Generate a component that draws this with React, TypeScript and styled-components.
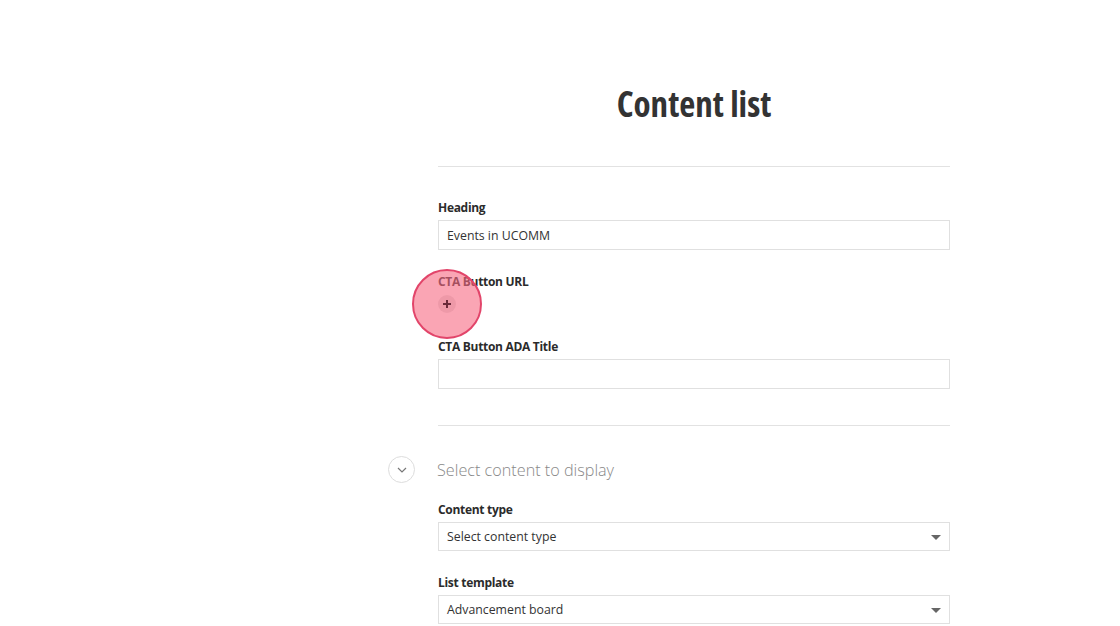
import styled, { createGlobalStyle } from 'styled-components';

const GlobalStyle = createGlobalStyle`
  body {
    margin: 0;
    background: #fff;
    font-family: "Open Sans", "Liberation Sans", sans-serif;
    color: #333;
  }
`;

const Field = ({ label, children }: { label: string; children: React.ReactNode }) => (
  <FieldWrap>
    <Label>{label}</Label>
    {children}
  </FieldWrap>
);

const App = () => {
  return (
    <Page>
      <GlobalStyle />
      <Column>
        <Title>Content list</Title>
        <Divider $top={38} />
        <Field label="Heading">
          <TextInput defaultValue="Events in UCOMM" />
        </Field>
        <Field label="CTA Button URL">
          <AddButton>
            <ClickMark />
            <svg width="10" height="10" viewBox="0 0 10 10">
              <path d="M5 1v8M1 5h8" stroke="#6b2a3a" strokeWidth="2" />
            </svg>
          </AddButton>
        </Field>
        <Field label="CTA Button ADA Title">
          <TextInput defaultValue="" />
        </Field>
        <Divider $top={13} $bottom={30} />
        <SectionHeader>
          <Toggle>
            <svg width="12" height="8" viewBox="0 0 12 8">
              <path d="M2 2l4 4 4-4" fill="none" stroke="#777" strokeWidth="1.2" />
            </svg>
          </Toggle>
          <SectionTitle>Select content to display</SectionTitle>
        </SectionHeader>
        <Field label="Content type">
          <Select>
            Select content type
            <Caret />
          </Select>
        </Field>
        <Field label="List template">
          <Select>
            Advancement board
            <Caret />
          </Select>
        </Field>
      </Column>
    </Page>
  );
};

export default App;

const Page = styled.div`
  padding-top: 80px;
  height: 626px;
  box-sizing: border-box;
  overflow: hidden;
`;

const Column = styled.div`
  width: 512px;
  margin-left: 438px;
  display: flex;
  flex-direction: column;
`;

const Title = styled.h1`
  margin: 0;
  text-align: center;
  font-size: 35px;
  line-height: 48px;
  font-weight: 700;
  font-stretch: 75%;
  color: #333;
`;

const Divider = styled.hr<{ $top: number; $bottom?: number }>`
  margin: ${(p) => p.$top}px 0 ${(p) => p.$bottom ?? 32}px;
  border: 0;
  border-top: 1px solid #e2e2e2;
`;

const FieldWrap = styled.div`
  display: flex;
  flex-direction: column;
  align-items: flex-start;
  margin-bottom: 23px;
`;

const Label = styled.label`
  font-size: 12px;
  line-height: 18px;
  font-weight: 700;
  letter-spacing: -0.3px;
  color: #2b2b2b;
  margin-bottom: 3px;
`;

const TextInput = styled.input`
  box-sizing: border-box;
  width: 100%;
  height: 30px;
  border: 1px solid #e0e0e0;
  padding: 0 8px;
  font-family: inherit;
  font-size: 12.3px;
  color: #333;
  outline: none;
`;

const AddButton = styled.div`
  position: relative;
  width: 18px;
  height: 18px;
  margin-top: 1px;
  margin-bottom: 2px;
  border-radius: 50%;
  background: #e2e2e2;
  display: flex;
  align-items: center;
  justify-content: center;

  svg {
    position: relative;
  }
`;

const ClickMark = styled.span`
  position: absolute;
  left: 50%;
  top: 50%;
  width: 70px;
  height: 70px;
  transform: translate(-50%, -50%);
  box-sizing: border-box;
  border-radius: 50%;
  border: 2.5px solid #e2456a;
  background: rgba(246, 105, 130, 0.6);
`;

const SectionHeader = styled.div`
  display: flex;
  align-items: center;
  gap: 22px;
  margin-left: -50px;
  margin-bottom: 18px;
`;

const Toggle = styled.div`
  box-sizing: border-box;
  width: 27px;
  height: 27px;
  border-radius: 50%;
  border: 1px solid #ddd;
  display: flex;
  align-items: center;
  justify-content: center;
`;

const SectionTitle = styled.h2`
  margin: 0;
  font-size: 16.2px;
  line-height: 24px;
  font-weight: 300;
  color: #888;
`;

const Select = styled.div`
  position: relative;
  box-sizing: border-box;
  width: 100%;
  height: 29px;
  border: 1px solid #e0e0e0;
  padding: 0 8px;
  font-size: 12.3px;
  line-height: 27px;
  color: #333;
`;

const Caret = styled.span`
  position: absolute;
  right: 8px;
  top: 12px;
  border-left: 5px solid transparent;
  border-right: 5px solid transparent;
  border-top: 5px solid #666;
`;
